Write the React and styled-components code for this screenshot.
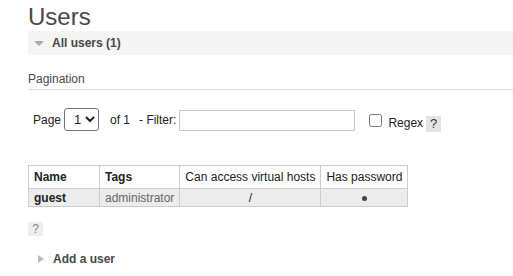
import React from "react";
import styled, { createGlobalStyle } from "styled-components";

const Global = createGlobalStyle`
  html, body { margin: 0; padding: 0; background: #fff; }
  body { font-family: "Liberation Sans", Arial, sans-serif; font-size: 12px; color: #222; }
`;

const Page = styled.div`
  display: flex;
  flex-direction: column;
  padding-left: 28px;
`;

const Title = styled.h1`
  margin: 3px 0 0;
  font-size: 24px;
  line-height: 28px;
  font-weight: normal;
  color: #484848;
`;

const SectionBar = styled.div`
  display: flex;
  align-items: center;
  height: 24px;
  padding-left: ${(p) => (p.$open ? 6 : 10)}px;
  background: ${(p) => (p.$open ? "#f5f5f5" : "transparent")};
  margin-top: ${(p) => p.$mt || 0}px;
`;

const Arrow = styled.span`
  width: 0;
  height: 0;
  ${(p) =>
    p.$open
      ? `border-left: 5.5px solid transparent; border-right: 5.5px solid transparent; border-top: 5px solid #aaa;`
      : `border-top: 4.5px solid transparent; border-bottom: 4.5px solid transparent; border-left: 6px solid #bbb;`}
`;

const SectionTitle = styled.span`
  margin-left: ${(p) => p.$ml}px;
  font-weight: bold;
  font-size: 12px;
  line-height: 14px;
  color: #484848;
`;

const SubHeading = styled.h3`
  margin: 17px 0 0;
  font-size: 12px;
  line-height: 14px;
  font-weight: normal;
  color: #484848;
  padding-bottom: 3px;
  border-bottom: 1px solid #ddd;
`;

const PagerRow = styled.div`
  display: flex;
  align-items: center;
  height: 24px;
  margin-top: 18px;
  padding-left: 5px;
  color: #222;
  font-size: 12px;
`;

const Label = styled.span`
  margin-left: ${(p) => p.$ml || 0}px;
  margin-top: ${(p) => p.$mt || 0}px;
  white-space: pre;
`;

const PageSelect = styled.select`
  margin-left: 3px;
  width: 35px;
  height: 23px;
  font-family: "Liberation Sans", Arial, sans-serif;
  font-size: 13px;
  border: 1px solid #767676;
  border-radius: 3px;
  background: #fff;
  color: #222;
  padding: 0 0 0 5px;
  align-self: flex-start;
`;

const FilterInput = styled.input`
  margin-left: 3px;
  width: 176px;
  height: 21px;
  box-sizing: border-box;
  border: 1px solid #c8c8c8;
  padding: 1px 4px;
  font-size: 12px;
`;

const Check = styled.input`
  margin: 0 0 0 14px;
  width: 13px;
  height: 13px;
`;

const Help = styled.span`
  display: inline-flex;
  align-items: center;
  justify-content: center;
  width: 15px;
  height: ${(p) => (p.$dark ? 16 : 14)}px;
  background: ${(p) => (p.$dark ? "#e4e4e4" : "#eee")};
  color: ${(p) => (p.$dark ? "#333" : "#888")};
  font-size: ${(p) => (p.$dark ? 13 : 12)}px;
  line-height: 14px;
  margin-left: ${(p) => p.$ml || 0}px;
  margin-top: ${(p) => p.$mt || 0}px;
  align-self: ${(p) => p.$align || "auto"};
`;

const Table = styled.table`
  margin-top: 33px;
  border-collapse: collapse;
  border: 1px solid #ccc;
  font-size: 12px;
  align-self: flex-start;
`;

const Th = styled.th`
  height: 22px;
  padding: 0 5px;
  border: 1px solid #ccc;
  background: #fff;
  text-align: ${(p) => (p.$center ? "center" : "left")};
  font-weight: ${(p) => (p.$bold ? "bold" : "normal")};
  color: #222;
  line-height: 14px;
  white-space: nowrap;
  min-width: ${(p) => p.$minw || 0}px;
`;

const Td = styled.td`
  height: 17px;
  padding: 0 5px;
  border: 1px solid #ccc;
  background: #ececec;
  text-align: ${(p) => (p.$center ? "center" : "left")};
  font-weight: ${(p) => (p.$bold ? "bold" : "normal")};
  color: ${(p) => (p.$muted ? "#666" : "#222")};
  line-height: 14px;
  white-space: nowrap;
`;

const Dot = styled.span`
  display: inline-block;
  width: 5px;
  height: 5px;
  border-radius: 50%;
  background: #444;
  vertical-align: middle;
`;

export default function App() {
  return (
    <>
      <Global />
      <Page>
        <Title>Users</Title>
        <SectionBar $open>
          <Arrow $open />
          <SectionTitle $ml={8}>All users (1)</SectionTitle>
        </SectionBar>
        <SubHeading>Pagination</SubHeading>
        <PagerRow>
          <Label>Page</Label>
          <PageSelect defaultValue="1">
            <option value="1">1</option>
          </PageSelect>
          <Label $ml={11}>of 1</Label>
          <Label $ml={9}>- Filter:</Label>
          <FilterInput type="text" />
          <Check type="checkbox" />
          <Label $ml={6} $mt={5}>Regex</Label>
          <Help $dark $ml={3} $align="flex-end">?</Help>
        </PagerRow>
        <Table>
          <thead>
            <tr>
              <Th $bold $minw={60}>Name</Th>
              <Th $bold>Tags</Th>
              <Th>Can access virtual hosts</Th>
              <Th>Has password</Th>
            </tr>
          </thead>
          <tbody>
            <tr>
              <Td $bold>guest</Td>
              <Td $muted>administrator</Td>
              <Td $center>/</Td>
              <Td $center>
                <Dot />
              </Td>
            </tr>
          </tbody>
        </Table>
        <Help $mt={15} $align="flex-start">?</Help>
        <SectionBar $mt={11}>
          <Arrow />
          <SectionTitle $ml={9}>Add a user</SectionTitle>
        </SectionBar>
      </Page>
    </>
  );
}
